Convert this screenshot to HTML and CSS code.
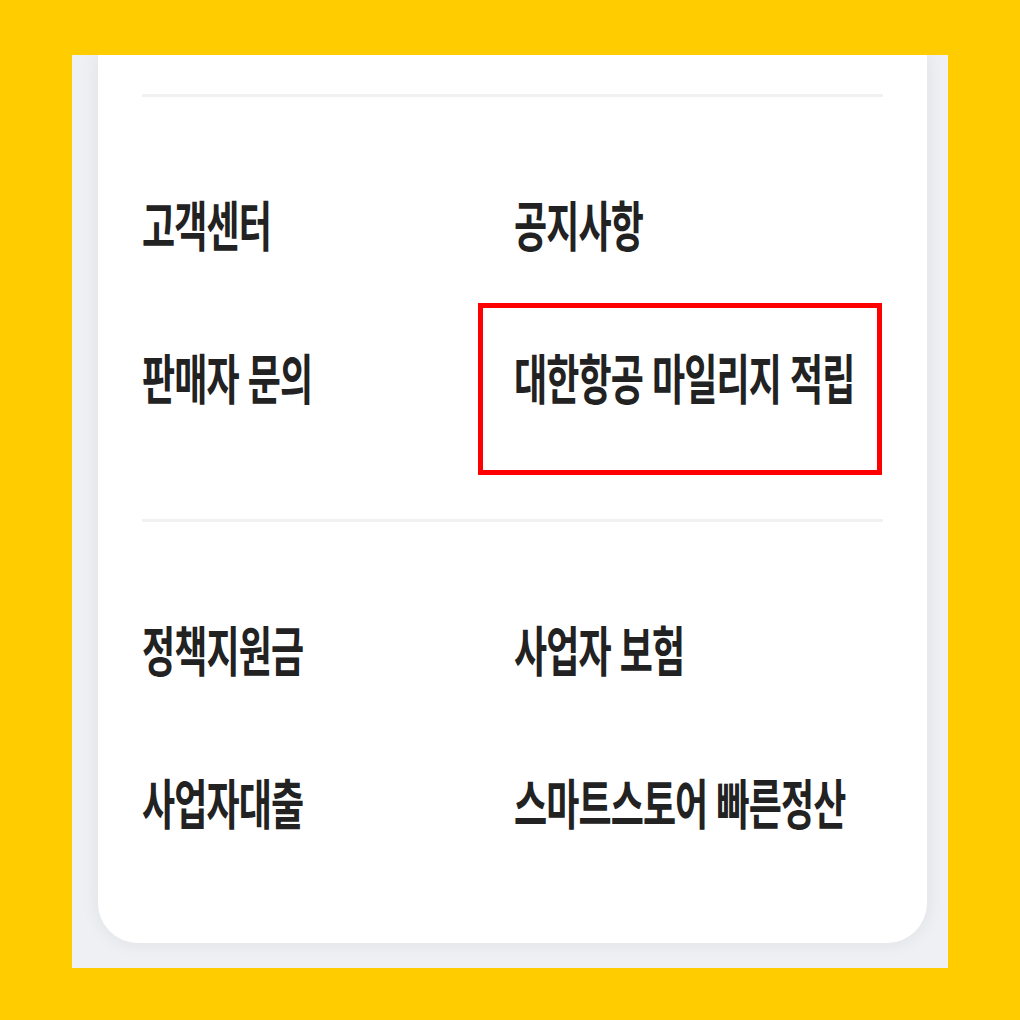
FILE: index.html
```html
<!DOCTYPE html>
<html lang="ko">
<head>
<meta charset="utf-8">
<link rel="stylesheet" href="styles.css">
</head>
<body>
<div class="panel">
  <div class="card">
    <div class="divider"></div>
    <div class="section">
      <div class="item"><span class="label">고객센터</span></div>
      <div class="item"><span class="label">공지사항</span></div>
      <div class="item"><span class="label">판매자 문의</span></div>
      <div class="item highlighted"><span class="label">대한항공 마일리지 적립</span><div class="mark"></div></div>
    </div>
    <div class="divider"></div>
    <div class="section">
      <div class="item"><span class="label">정책지원금</span></div>
      <div class="item"><span class="label">사업자 보험</span></div>
      <div class="item"><span class="label">사업자대출</span></div>
      <div class="item"><span class="label">스마트스토어 빠른정산</span></div>
    </div>
  </div>
</div>
</body>
</html>
```
FILE: styles.css
```css
html, body {
  margin: 0;
  padding: 0;
}
body {
  background: #ffcc00;
  width: 1020px;
  height: 1020px;
  padding-top: 55px;
  box-sizing: border-box;
  font-family: "Noto Sans CJK KR", "Noto Sans", sans-serif;
}
.panel {
  margin-left: 72px;
  width: 876px;
  height: 913px;
  background: #eef0f3;
  overflow: hidden;
  padding: 0 21px 0 26px;
  box-sizing: border-box;
}
.card {
  height: 888px;
  background: #ffffff;
  border-radius: 0 0 40px 40px;
  box-shadow: 0 0 18px rgba(40, 50, 70, 0.08);
  padding: 39px 44px 0 44px;
  box-sizing: border-box;
}
.divider {
  height: 3px;
  background: #f0f1f3;
}
.section {
  display: grid;
  grid-template-columns: 372px 1fr;
  grid-auto-rows: 100px;
  row-gap: 53px;
  padding: 76px 0 93px 0;
}
.item {
  position: relative;
  display: flex;
  align-items: center;
}
.label {
  display: inline-block;
  font-size: 36px;
  font-weight: 700;
  color: #222222;
  letter-spacing: -0.9px;
  transform: scaleY(1.5);
  transform-origin: left center;
  white-space: nowrap;
}
.mark {
  position: absolute;
  left: -36px;
  top: -23px;
  width: 404px;
  height: 172px;
  border: 5px solid #ff0000;
  box-sizing: border-box;
}
```
